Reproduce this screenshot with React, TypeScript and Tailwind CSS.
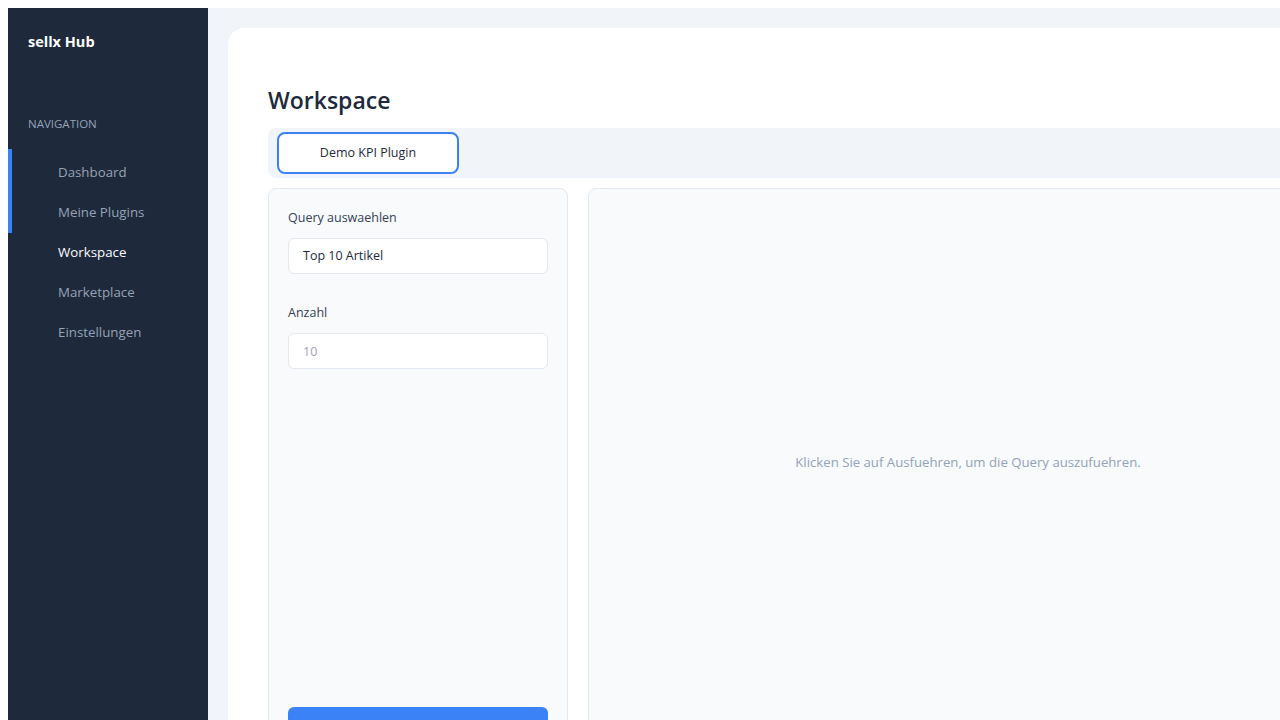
import { useState } from 'react';

const navItems = ['Dashboard', 'Meine Plugins', 'Workspace', 'Marketplace', 'Einstellungen'];

export default function App() {
  const [active] = useState('Workspace');
  const [count, setCount] = useState('');

  return (
    <div
      className="h-[720px] w-[1280px] overflow-hidden bg-white pl-2 pt-2"
      style={{ fontFamily: '"Open Sans", "Noto Sans", sans-serif' }}
    >
      <div className="flex h-[760px] w-[1400px]">
        {/* Sidebar */}
        <aside className="w-[200px] shrink-0 bg-[#1e293b] pt-[22px]">
          <div className="px-5 text-[14.5px] font-bold leading-6 text-white">sellx Hub</div>
          <div className="mt-[62px] px-5 text-[11.5px] uppercase leading-4 text-[#94a3b8]">Navigation</div>
          <nav className="mt-[17px]">
            <div className="border-l-4 border-[#3b82f6] pt-1">
              {navItems.slice(0, 2).map((item) => (
                <div key={item} className="flex h-10 items-center pl-[46px] text-[13.3px] text-[#94a3b8]">
                  {item}
                </div>
              ))}
            </div>
            {navItems.slice(2).map((item) => (
              <div
                key={item}
                className={`flex h-10 items-center pl-[50px] text-[13.3px] ${
                  item === active ? 'text-white' : 'text-[#94a3b8]'
                }`}
              >
                {item}
              </div>
            ))}
          </nav>
        </aside>

        {/* Main */}
        <main className="flex-1 bg-[#f1f5f9] p-5">
          <div className="h-full rounded-2xl bg-white px-10 pt-[54px]">
            <h1 className="text-[23px] font-semibold leading-9 text-[#1e293b]">Workspace</h1>

            <div className="mt-[10px] flex h-[50px] items-center rounded-l-lg bg-[#f1f5f9] px-[9px]">
              <button className="h-[42px] w-[182px] rounded-lg border-2 border-[#3b82f6] bg-white text-[12.5px] font-medium text-[#1e293b]">
                Demo KPI Plugin
              </button>
            </div>

            <div className="mt-[10px] flex gap-5">
              {/* Parameters */}
              <div className="flex h-[580px] w-[300px] shrink-0 flex-col rounded-lg border border-[#e2e8f0] bg-[#f8fafc] px-[19px] pb-5 pt-[19px]">
                <label className="text-[12.5px] font-medium leading-5 text-[#334155]">Query auswaehlen</label>
                <div className="mt-[10px] flex h-9 items-center rounded-md border border-[#e2e8f0] bg-white px-[14px] text-[12.5px] text-[#1e293b]">
                  Top 10 Artikel
                </div>

                <label className="mt-[29px] text-[12.5px] font-medium leading-5 text-[#334155]">Anzahl</label>
                <input
                  value={count}
                  onChange={(e) => setCount(e.target.value)}
                  placeholder="10"
                  className="mt-[10px] h-9 rounded-md border border-[#e2e8f0] bg-white px-[14px] text-[12.5px] text-[#1e293b] outline-none placeholder:text-[#a3a3b8]"
                />

                <button className="mt-auto h-10 shrink-0 rounded-md bg-[#3b82f6] text-[13px] font-medium text-white">
                  Ausfuehren
                </button>
              </div>

              {/* Result */}
              <div className="flex h-[580px] flex-1 items-center justify-center rounded-lg border border-[#e2e8f0] bg-[#f8fafc] pb-[30px]">
                <p className="text-[13.2px] text-[#94a3b8]">
                  Klicken Sie auf Ausfuehren, um die Query auszufuehren.
                </p>
              </div>
            </div>
          </div>
        </main>
      </div>
    </div>
  );
}
